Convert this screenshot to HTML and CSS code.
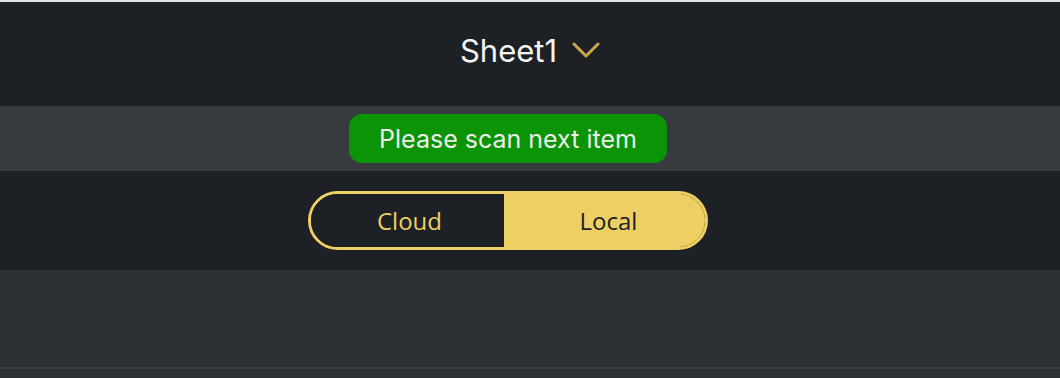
FILE: index.html
```html
<!DOCTYPE html>
<html lang="en">
<head>
<meta charset="utf-8">
<title>Sheet1</title>
<link rel="stylesheet" href="styles.css">
</head>
<body>
<div class="topline"></div>
<header class="header">
  <div class="title">Sheet1
    <svg class="chev" width="28" height="18" viewBox="0 0 28 18"><path d="M2 3 L14 15 L26 3" fill="none" stroke="#c9a84c" stroke-width="3" stroke-linecap="round" stroke-linejoin="round"/></svg>
  </div>
</header>
<section class="status">
  <div class="pill">Please scan next item</div>
</section>
<section class="mode">
  <div class="toggle">
    <div class="opt">Cloud</div>
    <div class="opt active">Local</div>
  </div>
</section>
<section class="content"></section>
<div class="divider"></div>
<div class="rest"></div>
</body>
</html>
```
FILE: styles.css
```css
html, body { margin: 0; padding: 0; }
body {
  width: 1060px;
  height: 378px;
  overflow: hidden;
  background: #2d3033;
  font-family: Inter, "Noto Sans", sans-serif;
}
.topline { height: 2px; background: #e3e3e3; }
.header {
  height: 104px;
  background: #1d2024;
  display: flex;
  align-items: center;
  justify-content: center;
}
.title {
  display: flex;
  align-items: center;
  gap: 15px;
  color: #f4f4f4;
  font-size: 31px;
  font-weight: 400;
  margin-top: -8px;
}
.status {
  height: 65px;
  background: #373a3f;
  display: flex;
  align-items: center;
  padding-right: 44px;
}
.pill {
  margin: 0 auto;
  width: 318px;
  height: 49px;
  box-sizing: border-box;
  background: #0a9406;
  border-radius: 13px;
  color: #ececec;
  font-size: 25px;
  display: flex;
  align-items: center;
  justify-content: center;
}
.mode {
  height: 99px;
  background: #1d2024;
  display: flex;
  align-items: flex-start;
  padding-right: 44px;
}
.toggle {
  margin: 20px auto 0;
  width: 400px;
  height: 59px;
  box-sizing: border-box;
  border: 3px solid #edcf64;
  border-radius: 30px;
  overflow: hidden;
  display: flex;
  font-family: "Open Sans", "Noto Sans", sans-serif;
  font-size: 24px;
  font-weight: 500;
}
.opt {
  flex: 1;
  display: flex;
  align-items: center;
  justify-content: center;
  color: #edcf64;
  background: #1d2024;
  box-sizing: border-box;
}
.opt:first-child { flex: 0 0 193px; padding-left: 4px; }
.opt.active {
  background: #edcf64;
  color: #1d2024;
  padding-left: 8px;
}
.content { height: 97px; background: #2d3033; }
.divider { height: 2px; background: #3a3d41; }
.rest { height: 9px; background: #2d3033; }
```
